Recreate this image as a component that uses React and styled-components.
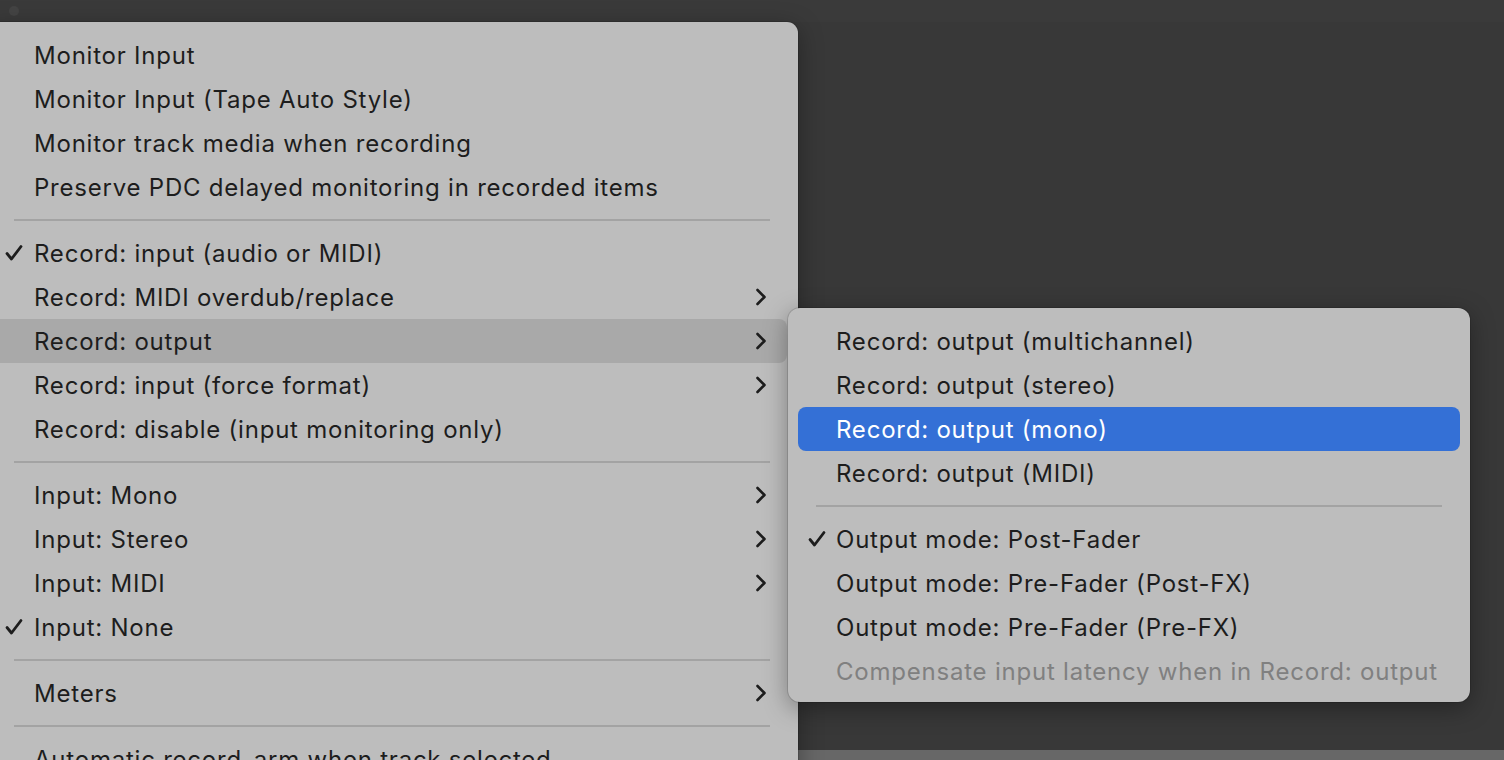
import React from "react";
import styled, { createGlobalStyle } from "styled-components";

const Global = createGlobalStyle`
  html, body { margin: 0; padding: 0; }
  body {
    background: #393939;
    font-family: Inter, "Noto Sans", "Liberation Sans", sans-serif;
    overflow: hidden;
  }
`;

const Page = styled.div`
  position: relative;
  width: 1504px;
  height: 760px;
  display: flex;
  flex-direction: column;
  background: #393939;
`;

const TopBar = styled.div`
  height: 22px;
  display: flex;
  align-items: center;
  padding-left: 9px;
  background: #3a3a3a;
`;

const Dot = styled.div`
  width: 10px;
  height: 10px;
  border-radius: 50%;
  background: #444;
`;

const Workspace = styled.div`
  flex: 1;
  background: #383838;
`;

const BottomStrip = styled.div`
  height: 10px;
  background: #676767;
`;

const Menu = styled.div`
  position: absolute;
  left: ${(p) => p.$left}px;
  top: ${(p) => p.$top}px;
  width: ${(p) => p.$width}px;
  ${(p) => (p.$height ? `height: ${p.$height}px;` : "")}
  background: #bdbdbd;
  border-radius: ${(p) => p.$radius};
  padding: ${(p) => p.$pad};
  box-sizing: border-box;
  display: flex;
  flex-direction: column;
  box-shadow: 0 0 0 1px rgba(0,0,0,0.12), 0 6px 24px rgba(0,0,0,0.35);
  overflow: hidden;
  z-index: ${(p) => p.$z || 1};
`;

const Row = styled.div`
  height: 44px;
  flex: 0 0 44px;
  display: flex;
  align-items: center;
  position: relative;
  padding-left: ${(p) => p.$indent}px;
  margin-right: ${(p) => p.$mr || 0}px;
  border-radius: ${(p) => p.$radius || "0"};
  background: ${(p) =>
    p.$state === "active" ? "#3470d6" : p.$state === "hover" ? "#a9a9a9" : "transparent"};
  color: ${(p) =>
    p.$state === "active" ? "#ffffff" : p.$disabled ? "#808080" : "#1d1d1d"};
  font-size: 24px;
  letter-spacing: 0.78px;
  white-space: nowrap;
`;

const Check = styled.svg`
  position: absolute;
  left: ${(p) => p.$x}px;
  top: 13px;
  width: 18px;
  height: 18px;
`;

const Chevron = styled.svg`
  position: absolute;
  left: ${(p) => p.$x}px;
  top: 13px;
  width: 12px;
  height: 18px;
`;

const Sep = styled.div`
  flex: 0 0 22px;
  display: flex;
  align-items: center;
  padding: 0 ${(p) => p.$r}px 0 ${(p) => p.$l}px;
  &::after {
    content: "";
    flex: 1;
    height: 2px;
    background: #a3a3a3;
  }
`;

const CheckIcon = ({ x }) => (
  <Check $x={x} viewBox="0 0 18 18">
    <path d="M2 9.5 L6.5 15 L16 2.5" fill="none" stroke="currentColor" strokeWidth="2.8" strokeLinecap="round" strokeLinejoin="round" />
  </Check>
);

const ChevronIcon = ({ x }) => (
  <Chevron $x={x} viewBox="0 0 12 18">
    <path d="M2.5 2 L9.5 9 L2.5 16" fill="none" stroke="currentColor" strokeWidth="2.6" strokeLinecap="round" strokeLinejoin="round" />
  </Chevron>
);

const mainItems = [
  { t: "Monitor Input" },
  { t: "Monitor Input (Tape Auto Style)" },
  { t: "Monitor track media when recording" },
  { t: "Preserve PDC delayed monitoring in recorded items" },
  { sep: true },
  { t: "Record: input (audio or MIDI)", check: true },
  { t: "Record: MIDI overdub/replace", sub: true },
  { t: "Record: output", sub: true, state: "hover" },
  { t: "Record: input (force format)", sub: true },
  { t: "Record: disable (input monitoring only)" },
  { sep: true },
  { t: "Input: Mono", sub: true },
  { t: "Input: Stereo", sub: true },
  { t: "Input: MIDI", sub: true },
  { t: "Input: None", check: true },
  { sep: true },
  { t: "Meters", sub: true },
  { sep: true },
  { t: "Automatic record-arm when track selected" },
];

const subItems = [
  { t: "Record: output (multichannel)" },
  { t: "Record: output (stereo)" },
  { t: "Record: output (mono)", state: "active" },
  { t: "Record: output (MIDI)" },
  { sep: true },
  { t: "Output mode: Post-Fader", check: true },
  { t: "Output mode: Pre-Fader (Post-FX)" },
  { t: "Output mode: Pre-Fader (Pre-FX)" },
  { t: "Compensate input latency when in Record: output", disabled: true },
];

export default function App() {
  return (
    <>
      <Global />
      <Page>
        <TopBar>
          <Dot />
        </TopBar>
        <Workspace />
        <BottomStrip />

        <Menu $left={-12} $top={22} $width={810} $height={760} $radius="0 11px 0 0" $pad="11px 0 0 0" $z={1}>
          {mainItems.map((it, i) =>
            it.sep ? (
              <Sep key={i} $l={26} $r={28} />
            ) : (
              <Row key={i} $indent={46} $mr={11} $radius="0 8px 8px 0" $state={it.state}>
                {it.check && <CheckIcon x={17} />}
                {it.t}
                {it.sub && <ChevronIcon x={767} />}
              </Row>
            )
          )}
        </Menu>

        <Menu $left={788} $top={308} $width={682} $height={394} $radius="12px" $pad="11px 10px 0 10px" $z={2}>
          {subItems.map((it, i) =>
            it.sep ? (
              <Sep key={i} $l={18} $r={18} />
            ) : (
              <Row key={i} $indent={38} $radius="8px" $state={it.state} $disabled={it.disabled}>
                {it.check && <CheckIcon x={10} />}
                {it.t}
              </Row>
            )
          )}
        </Menu>
      </Page>
    </>
  );
}
